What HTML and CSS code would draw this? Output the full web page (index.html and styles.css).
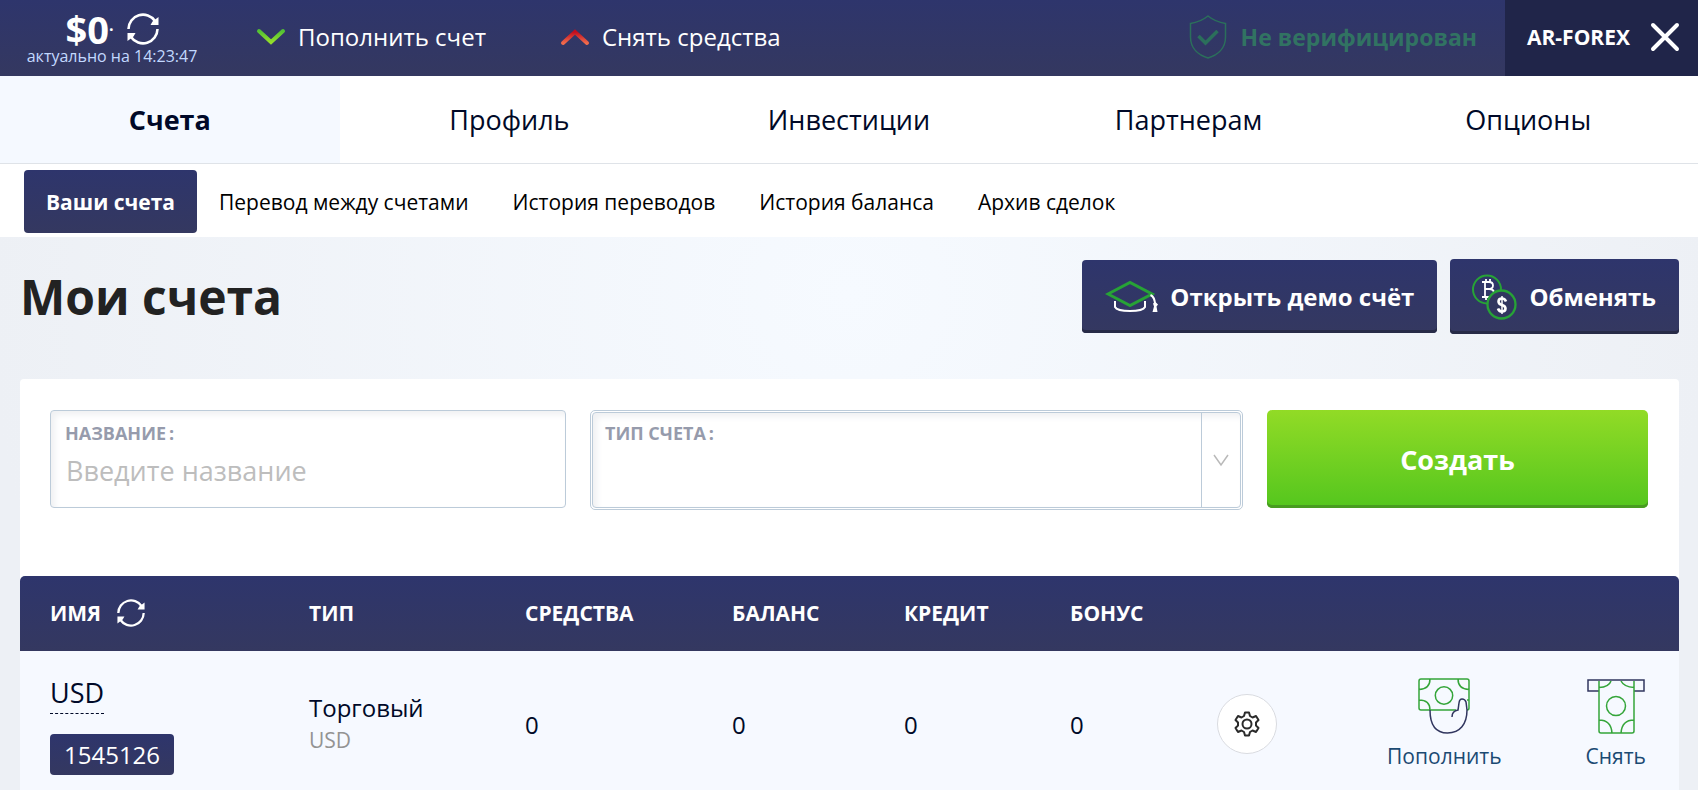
FILE: index.html
```html
<!DOCTYPE html>
<html lang="ru">
<head>
<meta charset="utf-8">
<meta name="viewport" content="width=device-width, initial-scale=1">
<title>Мои счета</title>
<link rel="stylesheet" href="styles.css">
</head>
<body>
<svg class="defs" width="0" height="0" aria-hidden="true">
  <defs>
    <symbol id="refresh" viewBox="0 0 32 32">
      <path d="M1.5 16A14.5 14.5 0 0 1 28 8M30.500 16A14.500 14.500 0 0 1 4 24" fill="none" stroke="#fff" stroke-width="2.600"/>
      <path d="M31.500 4V12H23.500L25.500 8.500Z M.5 28V20H8.500L6.500 23.500Z" fill="#fff"/>
    </symbol>
  </defs>
</svg>

<header class="topbar">
  <div class="balance">
    <div class="balance-line">
      <strong class="balance-sum">$0<span class="balance-dot">·</span></strong>
      <button class="icon-button" type="button" aria-label="Обновить баланс"><svg class="refresh-large"><use href="#refresh"/></svg></button>
    </div>
    <span class="balance-time">актуально на 14:23:47</span>
  </div>
  <a class="top-link top-link-deposit" href="#deposit">
    <svg width="30" height="18" viewBox="0 0 30 18"><defs><linearGradient id="green" x1="0" y1="0" x2="0" y2="1"><stop offset="0" stop-color="#52c234"/><stop offset="1" stop-color="#93de2b"/></linearGradient></defs><path d="M3 3L15 14L27 3" fill="none" stroke="url(#green)" stroke-width="4" stroke-linecap="round"/></svg>
    Пополнить счет
  </a>
  <a class="top-link top-link-withdraw" href="#withdraw">
    <svg width="30" height="18" viewBox="0 0 30 18"><defs><linearGradient id="red" x1="0" y1="0" x2="0" y2="1"><stop offset="0" stop-color="#c00d1e"/><stop offset="1" stop-color="#f06a4c"/></linearGradient></defs><path d="M3 15L15 4L27 15" fill="none" stroke="url(#red)" stroke-width="4" stroke-linecap="round"/></svg>
    Снять средства
  </a>
  <a class="verify" href="#verify">
    <svg width="38" height="44" viewBox="0 0 38 44" fill="none" stroke="#2b6f5b"><path d="M19 1C14 5 8 7.500 1.500 8.500V22C1.500 33 9 40 19 43C29 40 36.500 33 36.500 22V8.500C30 7.500 24 5 19 1Z" stroke-width="1.500"/><path d="M9.500 21L16.500 28L28.500 16" stroke-width="3.500"/></svg>
    Не верифицирован
  </a>
  <div class="account">
    <span>AR-FOREX</span>
    <button class="icon-button" type="button" aria-label="Закрыть"><svg width="30" height="30" viewBox="0 0 30 30"><path d="M3 3L27 27M27 3L3 27" stroke="#fff" stroke-width="4" stroke-linecap="round"/></svg></button>
  </div>
</header>

<nav class="tabs">
  <a class="tab tab-active" href="#accounts">Счета</a>
  <a class="tab" href="#profile">Профиль</a>
  <a class="tab" href="#invest">Инвестиции</a>
  <a class="tab" href="#partners">Партнерам</a>
  <a class="tab" href="#options">Опционы</a>
</nav>

<nav class="subnav">
  <a class="subnav-item subnav-active" href="#my">Ваши счета</a>
  <a class="subnav-item" href="#transfer">Перевод между счетами</a>
  <a class="subnav-item" href="#transfers">История переводов</a>
  <a class="subnav-item" href="#history">История баланса</a>
  <a class="subnav-item" href="#archive">Архив сделок</a>
</nav>

<main class="page">
  <div class="page-head">
    <h1 class="page-title">Мои счета</h1>
    <div class="page-actions">
      <button class="action action-demo" type="button">
        <svg width="54" height="34" viewBox="0 0 54 34" fill="none"><path d="M3 14L25 2.500L47 14L25 25.500Z" stroke="#27a336" stroke-width="3"/><path d="M10 21V27Q12 31 25 31Q38 31 40 27V21M45.500 15Q50 17 50 25V26" stroke="#fff" stroke-width="2"/><path d="M48 23.500L50.500 22L53 24.500L51.500 26.500L52.500 32H47.500L49 26.500Z" fill="#fff"/></svg>
        Открыть демо счёт
      </button>
      <button class="action action-exchange" type="button">
        <svg width="46" height="46" viewBox="0 0 46 46" fill="none" stroke="#fff"><circle cx="16" cy="15.500" r="14" stroke="#27a336" stroke-width="2"/><path d="M11 8H18Q22 8 22 11.500Q22 15 17 15H14H18Q23 15 23 19Q23 23 18 23H11M14 8V23M15 5V8M19 5V8M15 23V26M19 23V26" stroke-width="1.800"/><circle cx="30.500" cy="30.500" r="14" fill="#31365f" stroke="#27a336" stroke-width="2.300"/><path d="M35 27.500Q34 24.500 31 24.500Q27.500 24.500 27.500 27.500Q27.500 30 31 31Q34.500 32 34.500 34.500Q34.500 37.500 31 37.500Q28 37.500 27 34.500" stroke-width="2.600"/><path d="M31 22V40" stroke-width="1.500"/></svg>
        Обменять
      </button>
    </div>
  </div>

  <section class="card">
    <form class="create-form">
      <div class="field field-name">
        <label class="field-label" for="name">НАЗВАНИЕ<span class="colon">:</span></label>
        <input class="field-input" id="name" type="text" placeholder="Введите название">
      </div>
      <div class="field-frame">
        <div class="field field-type">
          <label class="field-label" for="type">ТИП СЧЕТА<span class="colon">:</span></label>
          <select class="field-select" id="type"><option></option></select>
          <span class="field-arrow"><svg width="16" height="13" viewBox="0 0 16 13"><path d="M1 1L8 11L15 1" fill="none" stroke="#b9b9b9" stroke-width="1.500"/></svg></span>
        </div>
      </div>
      <button class="create" type="button">Создать</button>
    </form>

    <table class="accounts">
      <colgroup><col class="col-name"><col class="col-type"><col class="col-funds"><col class="col-balance"><col class="col-credit"><col class="col-bonus"><col class="col-actions"></colgroup>
      <thead>
        <tr>
          <th><span class="name-head">ИМЯ <button class="icon-button" type="button" aria-label="Обновить счета"><svg class="refresh-small"><use href="#refresh"/></svg></button></span></th>
          <th>ТИП</th><th>СРЕДСТВА</th><th>БАЛАНС</th><th>КРЕДИТ</th><th>БОНУС</th><th></th>
        </tr>
      </thead>
      <tbody>
        <tr>
          <td><div class="account-name"><a class="account-label" href="#rename">USD</a><span class="account-number">1545126</span></div></td>
          <td><div class="type-name">Торговый</div><div class="type-currency">USD</div></td>
          <td>0</td><td>0</td><td>0</td><td>0</td>
          <td>
            <div class="row-actions">
              <button class="gear" type="button" aria-label="Настройки"><svg width="26" height="26" viewBox="0 0 26 26" fill="none" stroke="#2b2b2b" stroke-width="2"><path d="M11 1.500H15L16 5L18.500 6.500L22 5L24.500 9L22 11.500V14.500L24.500 17L22 21L18.500 19.500L16 21L15 24.500H11L10 21L7.500 19.500L4 21L1.500 17L4 14.500V11.500L1.500 9L4 5L7.500 6.500L10 5Z" stroke-linejoin="round"/><circle cx="13" cy="13" r="4.500"/></svg></button>
              <a class="money-link money-deposit" href="#deposit-row">
                <svg width="54" height="56" viewBox="0 0 54 56" fill="none" stroke="#35a53a" stroke-width="1.500"><path d="M39 32H4Q2 32 2 30V3Q2 1 4 1H50Q52 1 52 3V30Q52 32 50 32M2 11.500Q13 11 13 1M41 1Q41 11 52 11.500M2 22Q13 22 13 32M50 22H52"/><circle cx="27" cy="17.500" r="8.700"/><path d="M13 32C13 46 18 55 30.500 55C43 55 50 46 50 32L49 24Q48 21 45 21Q42.500 21 42 25L41 32Q35 33 35 39" stroke="#31365f"/></svg>
                Пополнить
              </a>
              <a class="money-link money-withdraw" href="#withdraw-row">
                <svg width="58" height="56" viewBox="0 0 58 56" fill="none" stroke="#35a53a" stroke-width="1.500"><path d="M12 13H1V2H57V13H47" stroke="#31365f"/><path d="M12 3V53Q12 55 14 55H45Q47 55 47 53V3M12 9.500Q22 9 24 3M34 3Q37 9 47 9.500M12 42Q24 42 25 55M47 42Q35 42 34 55"/><circle cx="29" cy="28" r="9.500"/></svg>
                Снять
              </a>
            </div>
          </td>
        </tr>
      </tbody>
    </table>
  </section>
</main>
</body>
</html>
```
FILE: styles.css
```css
*, *::before, *::after { box-sizing: border-box; }

html { height: 100%; }

body {
  margin: 0;
  min-height: 100%;
  display: flex;
  flex-direction: column;
  font-family: "Open Sans", "Noto Sans", sans-serif;
  color: #000928;
  overflow: hidden;
}

a { color: inherit; text-decoration: none; }
button { font-family: inherit; border: 0; cursor: pointer; }
svg { flex: none; display: block; }
.defs { position: absolute; }

.icon-button { display: flex; padding: 0; background: none; }
.refresh-large { width: 32px; height: 32px; }
.refresh-small { width: 28px; height: 28px; }

/* Top bar */
.topbar {
  display: flex;
  align-items: center;
  height: 76px;
  padding-left: 24px;
  color: #fff;
  background: linear-gradient(#2e356c, #343860);
}

.balance { display: flex; flex-direction: column; align-items: center; width: 176px; }
.balance-line { display: flex; align-items: center; justify-content: center; gap: 13px; height: 36px; padding-top: 2px; }
.balance-sum { display: flex; font-size: 38px; line-height: 34px; font-weight: 700; }
.balance-dot { font-size: 16px; }
.balance-time { font-size: 16px; line-height: 20px; color: #c3d9ff; white-space: nowrap; }

.top-link { display: flex; align-items: center; gap: 12px; padding-bottom: 2px; font-size: 24px; line-height: 32px; white-space: nowrap; }
.top-link-deposit { margin-left: 56px; }
.top-link-withdraw { margin-left: 74px; }

.verify {
  display: flex;
  align-items: center;
  gap: 14px;
  margin-left: auto;
  margin-right: 28px;
  padding-bottom: 2px;
  font-size: 23px;
  line-height: 32px;
  font-weight: 700;
  color: #317362;
  white-space: nowrap;
}

.account {
  display: flex;
  align-items: center;
  justify-content: space-between;
  align-self: stretch;
  width: 193px;
  padding: 0 18px 2px 22px;
  font-size: 21px;
  font-weight: 700;
  background: #202549;
}

/* Main tabs */
.tabs {
  display: grid;
  grid-template-columns: repeat(5, 1fr);
  height: 88px;
  border-bottom: 1px solid #dfe3e8;
  background: #fff;
}

.tab { display: flex; align-items: center; justify-content: center; font-size: 27px; }
.tab-active { font-weight: 700; background: #f5f9ff; }

/* Secondary navigation */
.subnav { display: flex; height: 73px; padding: 6px 24px 4px; background: #fff; }
.subnav-item {
  display: flex;
  align-items: center;
  padding: 0 22px;
  border-radius: 4px;
  font-size: 21px;
  color: #000;
  white-space: nowrap;
}
.subnav-active { font-weight: 700; color: #fff; background: linear-gradient(#2e356c, #343860); }

/* Page */
.page {
  flex: 1;
  padding: 22px 19px 0 20px;
  background: radial-gradient(circle at 50% 10%, #f6faff 0, #edf0f5 860px);
}

.page-head { display: flex; align-items: center; justify-content: space-between; height: 75px; margin-bottom: 45px; }
.page-title { margin: 0; font-size: 48px; line-height: 64px; font-weight: 700; color: #222; }
.page-actions { display: flex; align-items: center; gap: 13px; }

.action {
  display: flex;
  align-items: center;
  height: 75px;
  padding: 0 23px;
  border-radius: 4px;
  font-size: 24px;
  font-weight: 700;
  color: #fff;
  background: linear-gradient(#2e356c, #343860);
  box-shadow: inset 0 -3px #272b47;
  white-space: nowrap;
}
.action-demo { gap: 11px; height: 73px; }
.action-exchange { gap: 12px; padding-left: 21px; }

.card { border-radius: 4px; background: #fff; }

.create-form {
  display: grid;
  grid-template-columns: 516fr 653fr 381fr;
  gap: 24px;
  align-items: start;
  padding: 31px 31px 66px 30px;
}

.field {
  display: flex;
  flex-direction: column;
  position: relative;
  height: 98px;
  padding: 8px 14px;
  border: 1px solid #bccbd9;
  border-radius: 4px;
  background: #fff;
  box-shadow: inset 4px 4px 6px #f0f1f3;
}
.field-frame { padding: 1px; border: 1px solid #bccbd9; border-radius: 5px; }
.field-type { height: 96px; padding: 6px 12px; }

.field-label { font-size: 18px; line-height: 28px; font-weight: 700; color: #969bac; }
.colon { padding-left: 3px; }

.field-input {
  width: 100%;
  padding: 0 1px;
  border: 0;
  outline: 0;
  background: none;
  font-family: inherit;
  font-size: 27px;
  line-height: 48px;
}
.field-input::placeholder { color: #bdbdbd; opacity: 1; }

.field-select {
  position: absolute;
  inset: 0;
  width: 100%;
  height: 100%;
  border: 0;
  background: none;
  appearance: none;
}
.field-arrow {
  position: absolute;
  inset: 0 0 0 auto;
  display: flex;
  align-items: center;
  justify-content: center;
  width: 39px;
  border-left: 1px solid #bccbd9;
  pointer-events: none;
}

.create {
  height: 98px;
  border-radius: 5px;
  font-size: 27px;
  font-weight: 700;
  color: #fff;
  background: linear-gradient(#92db26, #54c61e);
  box-shadow: inset 0 -3px #489c20;
}

/* Accounts */
.accounts { width: 100%; table-layout: fixed; border-collapse: separate; border-spacing: 0; border-radius: 5px 5px 0 0; overflow: hidden; background: #f6f9ff; }
.accounts thead { background: linear-gradient(#2e356c, #343860); }
.accounts th { height: 75px; padding: 0 0 2px; text-align: left; font-size: 21px; font-weight: 700; color: #fff; }
.accounts th:first-child { padding-left: 30px; }
.accounts td { height: 146px; padding: 0; font-size: 24px; }
.accounts td:first-child { padding-left: 30px; }

.col-name { width: 289px; }
.col-type { width: 216px; }
.col-funds { width: 207px; }
.col-balance { width: 172px; }
.col-credit { width: 166px; }
.col-bonus { width: 147px; }

.name-head { display: flex; align-items: center; gap: 16px; }

.account-name { display: flex; flex-direction: column; align-items: flex-start; gap: 20px; }
.account-label { font-size: 27px; line-height: 40px; border-bottom: 1px dashed #000928; }
.account-number {
  padding: 0 14px;
  border-radius: 4px;
  font-size: 24px;
  line-height: 41px;
  color: #fff;
  background: linear-gradient(#2e356c, #343860);
}

.type-name { font-size: 24px; line-height: 32px; }
.type-currency { font-size: 21px; line-height: 32px; color: #939393; }

.row-actions { display: flex; align-items: center; padding-right: 33px; }
.gear {
  display: flex;
  align-items: center;
  justify-content: center;
  width: 60px;
  height: 60px;
  padding: 0;
  border: 1px solid #d9dbe0;
  border-radius: 50%;
  background: #fff;
}
.money-link {
  display: flex;
  flex-direction: column;
  align-items: center;
  gap: 8px;
  font-size: 21px;
  line-height: 28px;
  color: #1b4a72;
}
.money-deposit { margin-left: auto; }
.money-withdraw { margin-left: 84px; }
```
